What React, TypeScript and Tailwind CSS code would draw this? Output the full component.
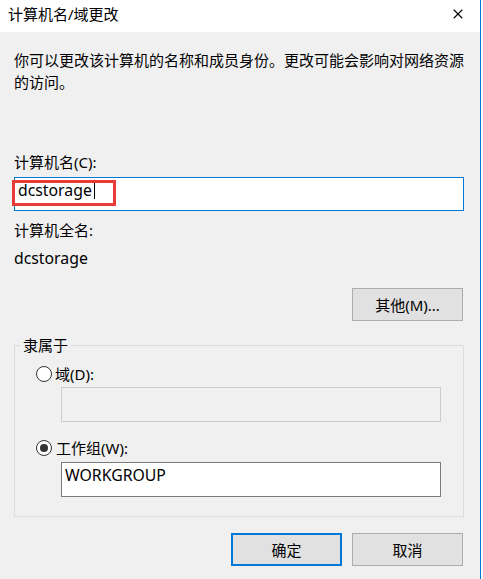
import { X } from 'lucide-react';

function Radio({ checked }: { checked?: boolean }) {
  return (
    <span className="flex h-[16px] w-[16px] shrink-0 items-center justify-center rounded-full border border-[#333333] bg-white">
      {checked && <span className="h-[8px] w-[8px] rounded-full bg-[#333333]" />}
    </span>
  );
}

function Button({ label, focused }: { label: string; focused?: boolean }) {
  return (
    <div
      className={
        focused
          ? 'flex h-[33px] w-[111px] items-center justify-center border-2 border-[#0078d7] bg-[#e1e1e1] leading-[20px]'
          : 'flex h-[33px] w-[111px] items-center justify-center border border-[#adadad] bg-[#e1e1e1] leading-[20px]'
      }
    >
      {label}
    </div>
  );
}

export default function App() {
  return (
    <div className="h-[579px] w-[483px] overflow-hidden bg-white font-['Noto_Sans','Noto_Sans_CJK_SC',sans-serif] text-[15px] text-black">
      <div className="h-full w-[481px] border-r border-[#0078d7]">
        {/* title bar */}
        <div className="flex h-[32px] items-center justify-between bg-white pb-[5px] pl-[8px] pr-[14px]">
          <span className="leading-[20px]">计算机名/域更改</span>
          <X size={16} strokeWidth={1.1} absoluteStrokeWidth className="text-black" />
        </div>

        <div className="h-full bg-[#f0f0f0] pl-[14px] pr-[16px] pt-[17px]">
          <p className="whitespace-nowrap leading-[22px]">
            你可以更改该计算机的名称和成员身份。更改可能会影响对网络资源
            <br />
            的访问。
          </p>

          <div className="mt-[58px] leading-[22px]">计算机名(C):</div>
          <div className="relative mt-[4px] flex h-[34px] items-start border border-[#0078d7] bg-white pl-[3px] pt-[2px]">
            <span className="text-[15.8px] leading-[20px]">dcstorage</span>
            <span className="ml-[2px] mt-[3px] h-[16px] w-[1px] bg-black" />
            {/* red highlight drawn over the field */}
            <div className="absolute left-[-3px] top-[2px] h-[26px] w-[104px] border-[3px] border-[#ea3b3b]" />
          </div>

          <div className="mt-[8px] leading-[22px]">计算机全名:</div>
          <div className="mt-[6px] text-[15.8px] leading-[22px]">dcstorage</div>

          <div className="mt-[19px] flex justify-end pr-[1px]">
            <Button label="其他(M)..." />
          </div>

          <fieldset className="mt-[13px] border border-[#dcdcdc] pb-[19px]">
            <legend className="ml-[5px] px-[3px] leading-[22px]">隶属于</legend>
            <div className="ml-[21px] mt-[7px] flex h-[22px] items-center gap-[3px] leading-[22px]">
              <Radio />
              <span>域(D):</span>
            </div>
            <div className="ml-[46px] mt-[2px] h-[35px] w-[380px] border border-[#cccccc] bg-[#f0f0f0]" />
            <div className="ml-[21px] mt-[15px] flex h-[22px] items-center gap-[4px] leading-[22px]">
              <Radio checked />
              <span>工作组(W):</span>
            </div>
            <div className="ml-[46px] mt-[3px] h-[35px] w-[380px] border border-[#7a7a7a] bg-white pl-[3px] pt-[2px] text-[15.8px] leading-[20px]">
              WORKGROUP
            </div>
          </fieldset>

          <div className="mt-[16px] flex justify-end gap-[10px] pr-[1px]">
            <Button label="确定" focused />
            <Button label="取消" />
          </div>
        </div>
      </div>
    </div>
  );
}
